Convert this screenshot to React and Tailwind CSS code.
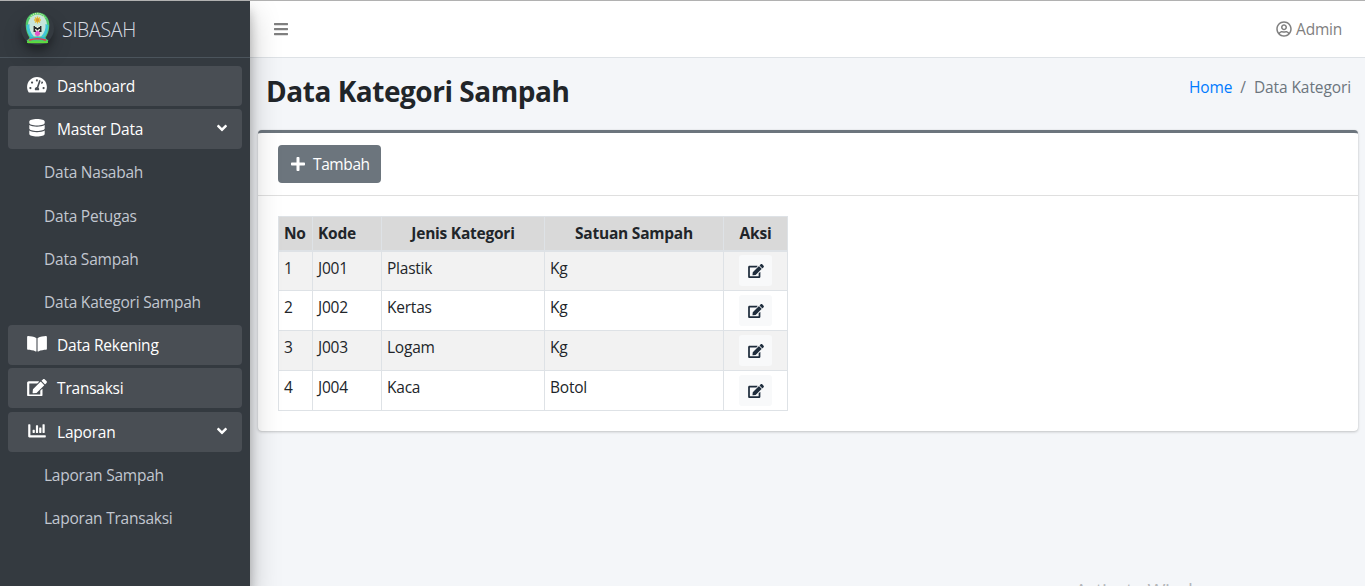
import {
  FaAngleDown,
  FaBars,
  FaBookOpen,
  FaChartBar,
  FaDatabase,
  FaEdit,
  FaPlus,
  FaRegUserCircle,
  FaTachometerAlt,
} from "react-icons/fa";

const menu = [
  { label: "Dashboard", icon: FaTachometerAlt },
  {
    label: "Master Data",
    icon: FaDatabase,
    children: ["Data Nasabah", "Data Petugas", "Data Sampah", "Data Kategori Sampah"],
  },
  { label: "Data Rekening", icon: FaBookOpen },
  { label: "Transaksi", icon: FaEdit },
  { label: "Laporan", icon: FaChartBar, children: ["Laporan Sampah", "Laporan Transaksi"] },
];

const rows = [
  ["1", "J001", "Plastik", "Kg"],
  ["2", "J002", "Kertas", "Kg"],
  ["3", "J003", "Logam", "Kg"],
  ["4", "J004", "Kaca", "Botol"],
];

function Logo() {
  return (
    <svg viewBox="0 0 25 32" className="h-8 w-[25px]">
      <path d="M12.5 .5C5 .5 .7 6 .7 13c0 6 2 10 4 13l-3 2.500 1.500 2.800h18.600l1.500-2.800-3-2.500c2-3 4-7 4-13C24.300 6 20 .5 12.500 .5z" fill="#51c96b" />
      <path d="M12.500 2.500C6.500 2.500 3 7.500 3 13.500c0 5 2 8.500 4 11h11c2-2.500 4-6 4-11 0-6-3.500-11-9.500-11z" fill="#c8e6dc" />
      <path d="M1.500 13c0 5 1.500 10 5.500 13l2-1.500C5.500 21 4 17 4.500 12zM23.500 13c0 5-1.500 10-5.500 13l-2-1.500C19.500 21 21 17 20.500 12z" fill="#42c7d8" />
      <path d="M5 6c2-3 4.500-4.600 7.500-4.600S18 3 20 6" fill="none" stroke="#c9f0a0" strokeWidth="1.300" strokeDasharray="1.200 1" />
      <path d="M12.500 4.500v7M9 8h7M10 5.500l5 5M15 5.500l-5 5" stroke="#e8ba35" strokeWidth="1.300" />
      <circle cx="12.500" cy="8" r="1.700" fill="#d89828" />
      <path d="M8.500 13.500l4 1.500 4-1.500v6l-4-1-4 1z" fill="#f1efd9" />
      <path d="M9.300 14v5.500M15.700 14v5.500M9.500 14.500l3 3 3-3M8.500 19.300h2.500M14 19.300h2.500" fill="none" stroke="#252b2b" strokeWidth="1.500" />
      <circle cx="12.500" cy="21.500" r="2.500" fill="#e254c9" />
      <path d="M4 26c3-2.500 5 .5 8.500-1.500C16 26.500 18 23.500 21 26l-2 2H6z" fill="#37b6c6" />
      <path d="M4 28.300c5-1.800 12-1.800 17 0" fill="none" stroke="#e4384f" strokeWidth="1.700" />
      <path d="M2 30.200h21" stroke="#61df36" strokeWidth="1.500" />
    </svg>
  );
}

function MenuItem({ item }) {
  const Icon = item.icon;
  return (
    <li>
      <a className="mb-[3.200px] flex h-10 items-center rounded bg-[#494e54] pr-[14px] pl-4 text-white">
        <span className="flex w-[25.600px] justify-center">
          <Icon className="-mt-0.5 h-[17.600px] w-5 shrink-0" />
        </span>
        <span className="ml-[7.500px] flex-1">{item.label}</span>
        {item.children && <FaAngleDown className="-mt-0.5 mr-[-2px] size-4" />}
      </a>
      {item.children && (
        <ul>
          {item.children.map((child) => (
            <li key={child} className="mb-[3.200px] flex h-10 items-center pl-9 text-[#c2c7d0]">
              {child}
            </li>
          ))}
        </ul>
      )}
    </li>
  );
}

function Sidebar() {
  return (
    <aside className="z-10 w-[250px] shrink-0 bg-[#343a40] shadow-[0_14px_28px_rgba(0,0,0,0.25),0_10px_10px_rgba(0,0,0,0.22)]">
      <div className="flex h-[57px] items-center border-b border-[#4b545c] pl-[21px]">
        <span className="-mt-0.5 flex size-[33px] items-center justify-center rounded-full shadow-[0_10px_20px_rgba(0,0,0,0.19),0_6px_6px_rgba(0,0,0,0.23)]">
          <Logo />
        </span>
        <span className="mt-0.5 ml-2 text-[19.500px] font-light tracking-[-0.250px] text-[#d8dce3]">SIBASAH</span>
      </div>
      <ul className="px-2 pt-2">
        {menu.map((item) => (
          <MenuItem key={item.label} item={item} />
        ))}
      </ul>
    </aside>
  );
}

function CategoryTable() {
  return (
    <table className="w-[510px] table-fixed border-collapse border border-[#dee2e6]">
      <colgroup>
        <col className="w-[34px]" />
        <col className="w-[69px]" />
        <col className="w-[163px]" />
        <col className="w-[179px]" />
        <col className="w-[64px]" />
      </colgroup>
      <thead>
        <tr className="h-[34px] bg-[#d9d9d9] font-bold">
          <th className="border border-b-2 border-[#dee2e6] pl-[5px] text-left">No</th>
          <th className="border border-b-2 border-[#dee2e6] pl-[5px] text-left">Kode</th>
          <th className="border border-b-2 border-[#dee2e6]">Jenis Kategori</th>
          <th className="border border-b-2 border-[#dee2e6]">Satuan Sampah</th>
          <th className="border border-b-2 border-[#dee2e6]">Aksi</th>
        </tr>
      </thead>
      <tbody>
        {rows.map((row) => (
          <tr key={row[0]} className="h-10 odd:bg-[#f2f2f2]">
            {row.map((cell, i) => (
              <td key={i} className="border border-[#dee2e6] pt-1 pl-[5px] align-top">
                {cell}
              </td>
            ))}
            <td className="border border-[#dee2e6] p-0">
              <button className="mx-auto flex h-[31px] w-[33px] items-center justify-center rounded-[3px] bg-[#f8f9fa] text-[#1f2d3d]">
                <FaEdit className="h-[14px] w-4" />
              </button>
            </td>
          </tr>
        ))}
      </tbody>
    </table>
  );
}

export default function App() {
  return (
    <div className="relative flex h-[586px] w-[1365px] overflow-hidden border-t border-[#b1b1b1] bg-[#f4f6f9] font-['Open_Sans','Noto_Sans',sans-serif] text-[15.500px] leading-6 tracking-[-0.230px] text-[#212529]">
      <Sidebar />
      <main className="flex min-w-0 flex-1 flex-col">
        <header className="flex h-[57px] items-center justify-between border-b border-[#dee2e6] bg-white pr-[23px] pl-[23px] text-[#7f7f7f]">
          <FaBars className="size-4" />
          <span className="flex items-center gap-1">
            <FaRegUserCircle className="size-4" />
            <span>Admin</span>
          </span>
        </header>
        <div className="flex h-[72px] justify-between pr-[14px] pl-4">
          <h1 className="mt-[14px] text-[28px] leading-[38px] font-bold tracking-[-0.470px]">Data Kategori Sampah</h1>
          <nav className="mt-[17px] flex gap-2 tracking-[-0.100px] text-[#6c757d]">
            <a className="text-[#007bff]">Home</a>
            <span>/</span>
            <span>Data Kategori</span>
          </nav>
        </div>
        <section className="mr-[7px] ml-2 h-[301px] rounded border-t-3 border-[#6c757d] bg-white shadow-[0_0_1px_rgba(0,0,0,0.125),0_1px_3px_rgba(0,0,0,0.2)]">
          <div className="flex h-[63px] border-b border-[#dfdfdf] pt-3 pl-5">
            <button className="flex h-[38px] w-[103px] items-center rounded bg-[#6c757d] pl-3 text-white">
              <FaPlus className="size-4" />
              <span className="ml-[7px] tracking-[-0.400px]">Tambah</span>
            </button>
          </div>
          <div className="pt-5 pl-5">
            <CategoryTable />
          </div>
        </section>
      </main>
      <div className="absolute top-[577px] left-[1075px] text-[19.500px] leading-[26px] tracking-[-0.500px] whitespace-nowrap text-[#b4b6b9]">
        Activate Windows
      </div>
    </div>
  );
}
